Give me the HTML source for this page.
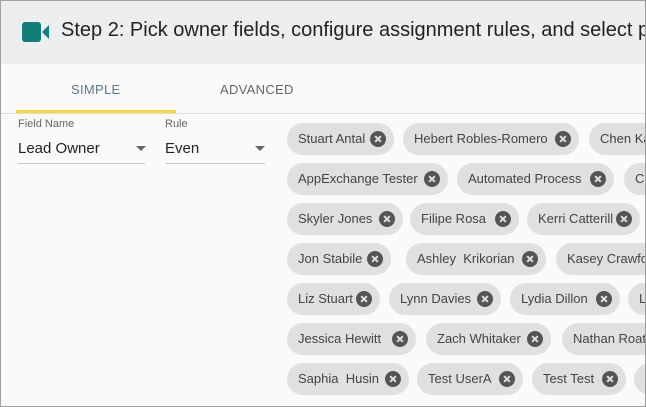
<!DOCTYPE html>
<html><head><style>
*{box-sizing:border-box;margin:0;padding:0}
body{width:646px;height:407px;overflow:hidden;background:#fafafa;font-family:"Liberation Sans",sans-serif;position:relative}
.frame{position:absolute;inset:0;border:1px solid #a0a0a0;pointer-events:none;z-index:5}
.hdr{position:absolute;left:0;top:0;width:646px;height:64px;background:#eceef0}
.hdr .t{position:absolute;left:61px;top:19px;font-size:20px;color:#222;white-space:nowrap}
.tab{position:absolute;top:82px;font-size:13px;letter-spacing:.3px}
.line{position:absolute;left:0;right:0;top:113px;height:1px;background:#ddd}
.ul{position:absolute;left:16px;top:110px;width:160px;height:3px;background:#fbd643}
.lbl{position:absolute;top:118px;font-size:11px;color:#666}
.val{position:absolute;top:140px;font-size:15px;color:#222}
.uline{position:absolute;top:163px;height:1px;background:#ccc}
.arr{position:absolute;top:146px;width:0;height:0;border-left:5px solid transparent;border-right:5px solid transparent;border-top:5px solid #666}
.c{position:absolute;height:32px;border-radius:16px;background:#e0e0e0;font-size:13px;color:#444;line-height:32px;padding-left:11px;white-space:nowrap;overflow:hidden}
.c i{position:absolute;right:8px;top:8px;width:16px;height:16px;border-radius:50%;background:#555}
.c i:before,.c i:after{content:"";position:absolute;left:7px;top:4px;width:2px;height:8px;background:#e0e0e0;transform:rotate(45deg)}
.c i:after{transform:rotate(-45deg)}
</style></head><body>
<div class="hdr">
<svg style="position:absolute;left:22px;top:22px" width="28" height="20" viewBox="0 0 28 20"><rect x="0" y="0" width="19" height="20" rx="3" fill="#0e8079"/><path d="M20 10 L27 3 L27 17 Z" fill="#0e8079"/></svg>
<div class="t">Step 2: Pick owner fields, configure assignment rules, and select p</div>
</div>
<div class="tab" style="left:71px;color:#5b7a8c">SIMPLE</div>
<div class="tab" style="left:220px;color:#666">ADVANCED</div>
<div class="line"></div><div class="ul"></div>
<div class="lbl" style="left:18px">Field Name</div>
<div class="lbl" style="left:165px">Rule</div>
<div class="val" style="left:18px">Lead Owner</div>
<div class="val" style="left:165px">Even</div>
<div class="arr" style="left:136px"></div><div class="arr" style="left:255px"></div>
<div class="uline" style="left:18px;width:127px"></div><div class="uline" style="left:165px;width:100px"></div>

<div class="c" style="left:287px;top:123px;width:107px">Stuart Antal<i></i></div>
<div class="c" style="left:403px;top:123px;width:176px">Hebert Robles-Romero<i></i></div>
<div class="c" style="left:589px;top:123px;width:80px">Chen Kalu</div>
<div class="c" style="left:287px;top:163px;width:161px">AppExchange Tester<i></i></div>
<div class="c" style="left:457px;top:163px;width:157px">Automated Process<i></i></div>
<div class="c" style="left:624px;top:163px;width:60px">C</div>
<div class="c" style="left:287px;top:203px;width:116px">Skyler Jones<i></i></div>
<div class="c" style="left:410px;top:203px;width:109px">Filipe Rosa<i></i></div>
<div class="c" style="left:527px;top:203px;width:113px">Kerri Catterill<i></i></div>
<div class="c" style="left:287px;top:243px;width:104px">Jon Stabile<i></i></div>
<div class="c" style="left:406px;top:243px;width:140px">Ashley&nbsp; Krikorian<i></i></div>
<div class="c" style="left:556px;top:243px;width:120px">Kasey Crawford</div>
<div class="c" style="left:287px;top:283px;width:93px">Liz Stuart<i></i></div>
<div class="c" style="left:389px;top:283px;width:112px">Lynn Davies<i></i></div>
<div class="c" style="left:510px;top:283px;width:110px">Lydia Dillon<i></i></div>
<div class="c" style="left:628px;top:283px;width:60px">L</div>
<div class="c" style="left:287px;top:323px;width:129px">Jessica Hewitt<i></i></div>
<div class="c" style="left:426px;top:323px;width:125px">Zach Whitaker<i></i></div>
<div class="c" style="left:562px;top:323px;width:120px">Nathan Roat</div>
<div class="c" style="left:287px;top:363px;width:122px">Saphia&nbsp; Husin<i></i></div>
<div class="c" style="left:417px;top:363px;width:106px">Test UserA<i></i></div>
<div class="c" style="left:532px;top:363px;width:94px">Test Test<i></i></div>
<div class="c" style="left:634px;top:363px;width:60px"></div>
<div class="frame"></div>
</body></html>
